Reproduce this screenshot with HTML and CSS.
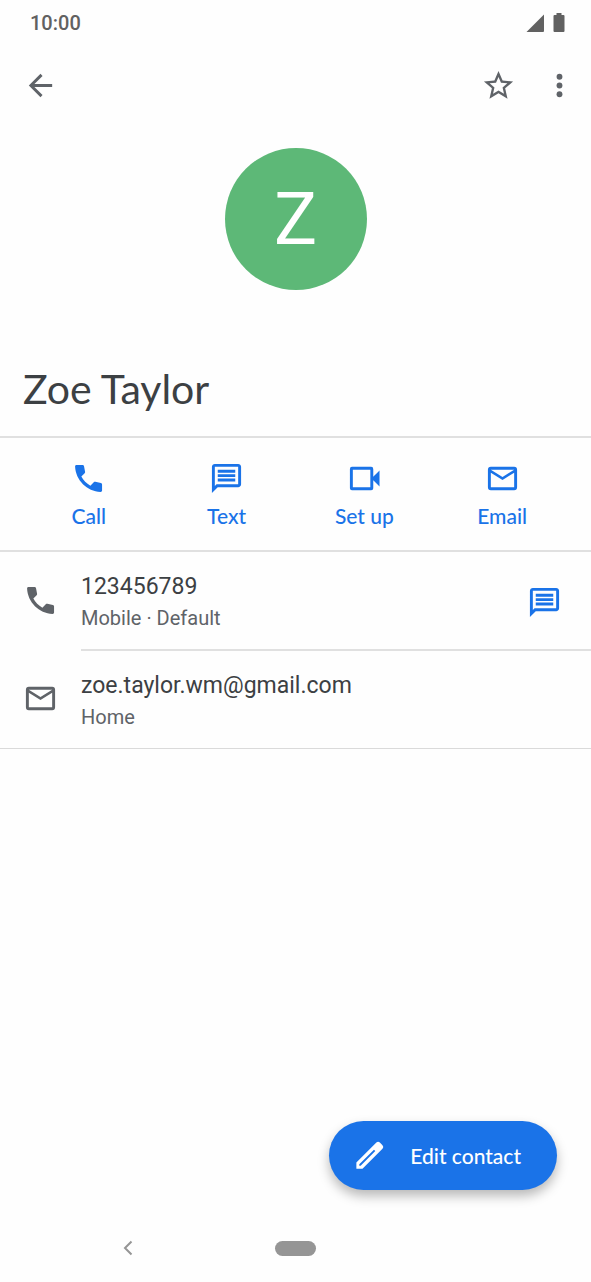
FILE: index.html
```html
<!DOCTYPE html>
<html lang="en">
<head>
<meta charset="utf-8">
<meta name="viewport" content="width=device-width, initial-scale=1">
<title>Zoe Taylor</title>
<link rel="stylesheet" href="styles.css">
</head>
<body>
<svg class="sprite" aria-hidden="true">
  <symbol id="phone" viewBox="0 0 24 24"><path d="M7.100 10.700c1.400 2.700 3.500 4.800 6.200 6.200l2.300-2.300c.3-.3.7-.4 1.100-.3l3.800.75c.5.1.8.5.8 1V20.200c0 .6-.4 1-1 1C11 20.800 3.200 13 2.800 3.700c0-.6.400-1 1-1h4.100c.5 0 .9.3 1 .8l.75 3.800c.1.400 0 .8-.3 1.100z"/></symbol>
  <symbol id="message" viewBox="0 0 24 24"><path d="M4 4h16v12H5.170L4 17.170V4m0-2c-1.100 0-1.990.9-1.990 2L2 22l4-4h14c1.100 0 2-.9 2-2V4c0-1.100-.9-2-2-2H4zm2 10h12v2H6v-2zm0-3h12v2H6V9zm0-3h12v2H6V6z"/></symbol>
  <symbol id="mail" viewBox="0 0 24 24"><path fill-rule="evenodd" d="M4 4h16a2 2 0 0 1 2 2v12a2 2 0 0 1-2 2H4a2 2 0 0 1-2-2V6a2 2 0 0 1 2-2zM4 8v10h16V8l-8 5zM4 6l8 5 8-5z"/></symbol>
</svg>
<div class="screen">
  <div class="status">
    <span class="clock">10:00</span>
    <svg class="signal" viewBox="0 0 18 18" aria-hidden="true"><path d="M18 0.500V17a1 1 0 0 1-1 1H.5z"/></svg>
    <svg class="battery" viewBox="0 0 12 20" aria-hidden="true"><path d="M3.500 0h5v2H10.500a1 1 0 0 1 1 1v15a1 1 0 0 1-1 1h-9a1 1 0 0 1-1-1V3a1 1 0 0 1 1-1h2z"/></svg>
  </div>
  <header class="toolbar">
    <button class="icon-button" aria-label="Back"><svg class="icon" viewBox="0 0 24 24"><path d="M20 11H7.830l5.590-5.590L12 4l-8 8 8 8 1.410-1.410L7.830 13H20z"/></svg></button>
    <button class="icon-button star" aria-label="Add to favorites"><svg class="icon" viewBox="0 0 24 24"><path d="M22 9.240l-7.190-.62L12 2 9.190 8.630 2 9.240l5.460 4.730L5.820 21 12 17.270 18.180 21l-1.630-7.030L22 9.240zM12 15.400l-3.760 2.270 1-4.280-3.320-2.880 4.380-.38L12 6.100l1.710 4.040 4.380.38-3.320 2.880 1 4.280L12 15.400z"/></svg></button>
    <button class="icon-button" aria-label="More options"><svg class="icon" viewBox="0 0 24 24"><circle cx="12" cy="6" r="2"/><circle cx="12" cy="12" r="2"/><circle cx="12" cy="18" r="2"/></svg></button>
  </header>
  <main>
    <div class="avatar" aria-hidden="true">Z</div>
    <h1 class="name">Zoe Taylor</h1>
    <div class="actions">
      <button class="action"><svg class="icon"><use href="#phone"/></svg>Call</button>
      <button class="action"><svg class="icon"><use href="#message"/></svg>Text</button>
      <button class="action"><svg class="icon" viewBox="0 0 24 24"><path fill-rule="evenodd" d="M3.400 4h13.200a1.400 1.400 0 0 1 1.400 1.400v5.400l4.300-4.300v11L18 13.200v5.400a1.400 1.400 0 0 1-1.400 1.400H3.400a1.400 1.400 0 0 1-1.400-1.400V5.400A1.400 1.400 0 0 1 3.400 4zM4 6v12h12V6z"/></svg>Set up</button>
      <button class="action"><svg class="icon"><use href="#mail"/></svg>Email</button>
    </div>
    <ul class="details">
      <li class="row">
        <svg class="icon" aria-hidden="true"><use href="#phone"/></svg>
        <div class="body">
          <div class="text"><span class="value">123456789</span><span class="kind">Mobile · Default</span></div>
          <button class="icon-button send" aria-label="Text 123456789"><svg class="icon"><use href="#message"/></svg></button>
        </div>
      </li>
      <li class="row">
        <svg class="icon" aria-hidden="true"><use href="#mail"/></svg>
        <div class="body">
          <div class="text"><span class="value">zoe.taylor.wm@gmail.com</span><span class="kind">Home</span></div>
        </div>
      </li>
    </ul>
  </main>
  <button class="edit"><svg class="icon" viewBox="0 0 24 24" aria-hidden="true"><path fill-rule="evenodd" d="M3 16.800V21h4.200L20.900 7.300a1.700 1.700 0 0 0 0-2.400l-1.800-1.800a1.700 1.700 0 0 0-2.400 0zM5 18.080L15.060 8.020l.92.92L5.920 19H5z"/></svg>Edit contact</button>
  <nav class="system">
    <button class="system-back" aria-label="System back"><svg class="chevron" viewBox="0 0 10 16"><path d="M8.500 1.500L2 8l6.500 6.500"/></svg></button>
    <button class="pill" aria-label="Home"></button>
  </nav>
</div>
</body>
</html>
```
FILE: styles.css
```css
* { box-sizing: border-box; }

body {
  margin: 0;
  background: #fefefe;
  color: #3c4043;
  font-family: Roboto, "Liberation Sans", sans-serif;
}

button {
  margin: 0;
  padding: 0;
  border: 0;
  background: none;
  color: inherit;
  font: inherit;
  cursor: pointer;
}

svg { display: block; fill: currentColor; }

.sprite { position: absolute; width: 0; height: 0; }

.icon { width: 35px; height: 35px; flex: none; }

.screen {
  display: flex;
  flex-direction: column;
  min-height: 100vh;
}

.status {
  display: flex;
  align-items: center;
  height: 46px;
  padding: 0 26px 0 30px;
  color: #616161;
}

.clock { margin-right: auto; font-size: 20px; font-weight: 500; }
.signal { width: 18px; height: 18px; }
.battery { width: 12px; height: 20px; margin-left: 9px; }

.toolbar {
  display: flex;
  align-items: center;
  height: 79px;
  padding: 0 14px 0 23px;
  color: #5f6368;
}

.icon-button { display: flex; }
.star { margin-left: auto; margin-right: 26px; }

.avatar {
  display: flex;
  align-items: center;
  justify-content: center;
  width: 142px;
  height: 142px;
  margin: 23px auto 0;
  border-radius: 50%;
  background: #5db877;
  color: #fff;
  font-size: 72px;
}

.name {
  margin: 0;
  padding: 74px 23px 22px;
  font-family: Lato, sans-serif;
  font-size: 41px;
  font-weight: 400;
  line-height: 50px;
}

.actions {
  display: grid;
  grid-template-columns: repeat(4, 1fr);
  padding: 23px 20px 22px;
  border: solid #e0e0e0;
  border-width: 2px 0;
  color: #1a73e8;
}

.action {
  display: flex;
  flex-direction: column;
  align-items: center;
  gap: 7px;
  font-family: Lato, sans-serif;
  font-size: 21px;
  font-weight: 500;
  line-height: 25px;
}

.details {
  margin: 0;
  padding: 0;
  list-style: none;
  border-bottom: 1px solid #dadada;
}

.row {
  display: flex;
  align-items: center;
  gap: 23px;
  padding-left: 23px;
  color: #5f6368;
}

.body {
  display: flex;
  flex: 1;
  align-items: center;
  justify-content: space-between;
  padding: 19px 29px 16px 0;
}

.row + .row .body { border-top: 2px solid #e0e0e0; }

.text { display: flex; flex-direction: column; }
.value { color: #3c4043; font-size: 23px; line-height: 32px; }
.kind { font-size: 20px; line-height: 30px; }
.send { color: #1a73e8; }

.edit {
  display: flex;
  align-items: center;
  align-self: flex-end;
  gap: 23px;
  height: 69px;
  margin: auto 34px 24px;
  padding: 0 36px 0 23px;
  border-radius: 35px;
  background: #1a73e8;
  box-shadow: 0 6px 12px rgba(0, 0, 0, 0.28);
  color: #fff;
  font-family: Lato, sans-serif;
  font-size: 21px;
  font-weight: 500;
}

.system {
  display: grid;
  grid-template-columns: 1fr auto 1fr;
  column-gap: 20px;
  align-items: center;
  height: 68px;
  color: #959595;
}

.system-back { justify-self: center; }
.chevron { width: 10px; height: 16px; fill: none; stroke: currentColor; stroke-width: 2; }
.pill { width: 41px; height: 15px; border-radius: 8px; background: #959595; }
```
